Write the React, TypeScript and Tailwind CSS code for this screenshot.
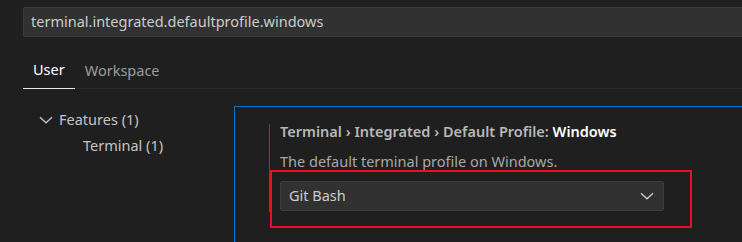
const font = 'font-["Noto_Sans","Open_Sans",sans-serif]';

const Chevron = ({ className }: { className?: string }) => (
  <svg className={className} width="14" height="8" viewBox="0 0 14 8" fill="none">
    <path d="M1 1.2 L7 6.8 L13 1.2" stroke="currentColor" strokeWidth="1.3" />
  </svg>
);

const SearchBox = () => (
  <div className="pl-[23px] pt-[7px]">
    <div className="flex h-[30px] w-[760px] items-center rounded-[2px] border border-[#3c3c3c] bg-[#313131] pl-[7px] text-[14.5px] text-[#cccccc]">
      terminal.integrated.defaultprofile.windows
    </div>
  </div>
);

const Tabs = () => (
  <div className="ml-[23px] flex border-b border-[#2b2b2b] pt-[15px] text-[14.5px]">
    <div className="-mb-px flex h-[37px] items-center border-b border-[#e7e7e7] px-[10px] text-white">User</div>
    <div className="-mb-px flex h-[37px] items-center px-[10px] text-[#9d9d9d]">Workspace</div>
  </div>
);

const Tree = () => (
  <div className="w-[234px] shrink-0 pt-[1px] text-[14.5px] text-[#c5c5c5]">
    <div className="flex h-[26px] items-center pl-[39px]">
      <Chevron className="mr-[6px] text-[#c5c5c5]" />
      <span>Features (1)</span>
    </div>
    <div className="flex h-[26px] items-center pl-[83px]">Terminal (1)</div>
  </div>
);

const Setting = () => (
  <div className="relative flex-1 border-l border-t border-[#0078d4] pl-[34px] pt-[17px]">
    <div className="flex h-[88px] flex-col border-l border-[#6b4f1d] pl-[10px]">
      <div className="flex h-[16px] items-center text-[14.5px] font-semibold whitespace-nowrap text-[#b8b8b8]">
        Terminal › Integrated › Default Profile:&nbsp;<span className="text-white">Windows</span>
      </div>
      <div className="mt-[14px] flex h-[16px] items-center text-[14.5px] text-[#a8a8a8]">
        The default terminal profile on Windows.
      </div>
      <div className="mt-[11px] flex h-[30px] w-[384px] items-center justify-between rounded-[2px] border border-[#3c3c3c] bg-[#313131] pl-[8px] pr-[9px] text-[14.5px] text-[#cccccc]">
        <span>Git Bash</span>
        <Chevron className="text-[#cccccc]" />
      </div>
    </div>
    <div className="absolute left-[35px] top-[63px] h-[58px] w-[422px] border-2 border-[#e81123]" />
  </div>
);

export default function App() {
  return (
    <div className={`flex h-[242px] w-[742px] flex-col overflow-hidden bg-[#1f1f1f] ${font}`}>
      <SearchBox />
      <Tabs />
      <div className="mt-[17px] flex flex-1">
        <Tree />
        <Setting />
      </div>
    </div>
  );
}
